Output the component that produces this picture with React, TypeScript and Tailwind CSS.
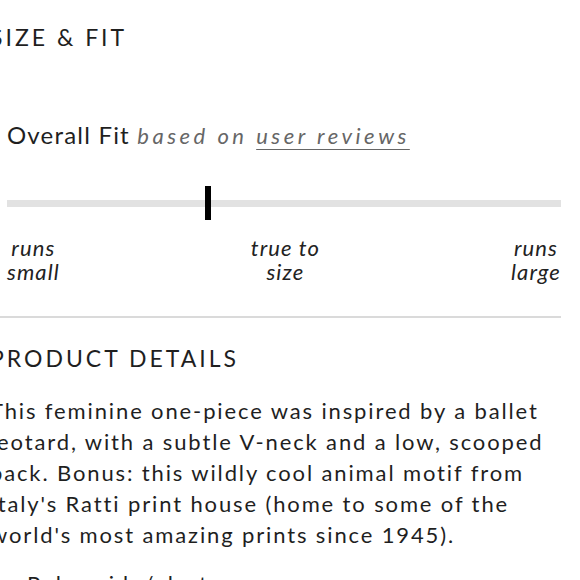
import React from "react";

const labels = [
  { top: "runs", bottom: "small" },
  { top: "true to", bottom: "size" },
  { top: "runs", bottom: "large" },
];

const details = [
  "This feminine one-piece was inspired by a ballet",
  "leotard, with a subtle V-neck and a low, scooped",
  "back. Bonus: this wildly cool animal motif from",
  "Italy's Ratti print house (home to some of the",
  "world's most amazing prints since 1945).",
];

export default function App() {
  return (
    <div className="h-[580px] w-[580px] overflow-hidden bg-white text-[#1f1f1f]" style={{ fontFamily: "Lato, 'Noto Sans', sans-serif" }}>
      <div className="-ml-[10px] w-[571px]">
        {/* Size & Fit */}
        <section className="pt-[23px]">
          <h2 className="text-[23px] leading-[28px] tracking-[0.13em] uppercase">Size &amp; Fit</h2>

          <div className="pl-[17px] mt-[69px]">
            <p className="text-[24px] leading-[30px] tracking-[0.05em] whitespace-nowrap">
              Overall Fit{" "}
              <span className="italic text-[#666] text-[22px] tracking-[0.16em]">
                based on <span className="underline underline-offset-[5px] decoration-1">user reviews</span>
              </span>
            </p>

            <div className="relative mt-[35px] h-[34px] flex items-center">
              <div className="h-[7px] w-full bg-[#e2e2e2]" />
              <div className="absolute left-[35.8%] top-0 h-[34px] w-[6px] bg-black" />
            </div>

            <div className="mt-[16px] flex justify-between italic text-[22px] leading-[24px] tracking-[0.05em] text-[#222]">
              {labels.map((l, i) => (
                <div key={i} className="text-center">
                  <div>{l.top}</div>
                  <div>{l.bottom}</div>
                </div>
              ))}
            </div>
          </div>

          <div className="mt-[32px] h-[2px] bg-[#dadada]" />
        </section>

        {/* Product Details */}
        <section className="pt-[26px]">
          <h2 className="text-[23px] leading-[28px] tracking-[0.13em] uppercase">Product Details</h2>
          <div className="mt-[23px] text-[22px] leading-[31px] tracking-[0.085em] whitespace-nowrap">
            {details.map((line, i) => (
              <div key={i}>{line}</div>
            ))}
          </div>
          <ul className="mt-[18px] list-disc pl-[37px] text-[22px] leading-[31px] tracking-[0.085em]">
            <li>Polyamide/elastane</li>
          </ul>
        </section>
      </div>
    </div>
  );
}
